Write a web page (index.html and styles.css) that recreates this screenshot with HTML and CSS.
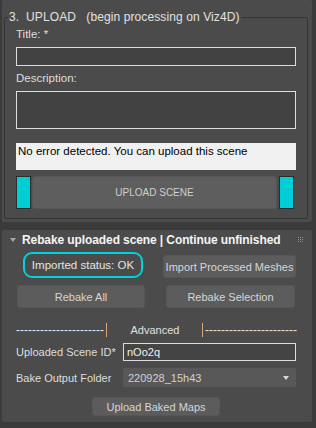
FILE: index.html
```html
<!DOCTYPE html>
<html lang="en">
<head>
    <meta charset="UTF-8">
    <meta name="viewport" content="width=device-width, initial-scale=1.0">
    <title>Viz4D - Upload</title>
    <link rel="stylesheet" href="styles.css">
</head>
<body>
    <!-- Rollout 3 : upload -->
    <div class="rollout upload">
        <fieldset class="group">
            <legend class="group-title">3.  UPLOAD   (begin processing on Viz4D)</legend>
            <label class="field-label">Title: *</label>
            <input class="text-input title-input" type="text">
            <label class="field-label second">Description:</label>
            <textarea class="text-input desc-input"></textarea>
            <div class="status-bar">No error detected. You can upload this scene</div>
            <div class="upload-row">
                <span class="cyan-block"></span>
                <button class="btn upload-btn">UPLOAD SCENE</button>
                <span class="cyan-block"></span>
            </div>
        </fieldset>
    </div>

    <!-- Rollout : rebake -->
    <div class="rollout rebake">
        <div class="rollout-header">
            <span class="caret"></span>
            <span class="rollout-title">Rebake uploaded scene | Continue unfinished</span>
            <svg class="grip" width="5" height="5" viewBox="0 0 5 5">
                <rect x="0" y="0" width="1" height="1"/><rect x="2" y="0" width="1" height="1"/><rect x="4" y="0" width="1" height="1"/>
                <rect x="0" y="2" width="1" height="1"/><rect x="2" y="2" width="1" height="1"/><rect x="4" y="2" width="1" height="1"/>
                <rect x="0" y="4" width="1" height="1"/><rect x="2" y="4" width="1" height="1"/><rect x="4" y="4" width="1" height="1"/>
            </svg>
        </div>

        <div class="btn-row first">
            <div class="status-pill">Imported status: OK</div>
            <button class="btn import-btn">Import Processed Meshes</button>
        </div>
        <div class="btn-row second">
            <button class="btn rebake-all">Rebake All</button>
            <button class="btn rebake-sel">Rebake Selection</button>
        </div>

        <div class="separator">
            <span class="dashes left">----------------------</span>
            <span class="pipe"></span>
            <span class="sep-label">Advanced</span>
            <span class="pipe"></span>
            <span class="dashes right">-----------------------</span>
        </div>

        <div class="field-row">
            <span class="row-label">Uploaded Scene ID*</span>
            <input class="text-input id-input" type="text" value="nOo2q">
        </div>
        <div class="field-row folder">
            <span class="row-label">Bake Output Folder</span>
            <div class="dropdown">
                <span>220928_15h43</span>
                <span class="dropdown-arrow"></span>
            </div>
        </div>

        <div class="bottom-row">
            <button class="btn upload-maps">Upload Baked Maps</button>
        </div>
    </div>
</body>
</html>
```

FILE: styles.css
```css
body {
    margin: 0;
    background-color: #3b3b3b;
    font-family: "Liberation Sans", Arial, sans-serif;
    font-size: 11px;
    color: #dedede;
}

/* Panneaux (rollouts) */
.rollout {
    margin: 0 4px 0 2px;
    background-color: #4b4b4b;
    border-radius: 2px;
}

.upload {
    padding: 10px 4px 3px 2px;
}

.rebake {
    margin-top: 8px;
    padding: 0 0 6px 0;
}

/* Cadre de groupe */
.group {
    margin: 0;
    padding: 3px 11px 9px 11px;
    border: 1px solid #353535;
    border-radius: 2px;
    min-width: 0;
}

.group-title {
    margin-left: -8px;
    padding: 0 1px;
    font-size: 12px;
    line-height: 14px;
    white-space: pre;
    color: #e2e2e2;
    letter-spacing: 0.1px;
}

.field-label {
    display: block;
    line-height: 14px;
    font-size: 11.5px;
}

    .field-label.second {
        margin-top: 5px;
    }

.text-input {
    display: block;
    box-sizing: border-box;
    margin: 0;
    background-color: #424242;
    border: 1px solid #dcdcdc;
    color: #f0f0f0;
    font-family: inherit;
    font-size: 11px;
    outline: none;
}

.title-input {
    width: 100%;
    height: 19px;
    margin-top: 6px;
}

.desc-input {
    width: 100%;
    height: 38px;
    margin-top: 6px;
    resize: none;
}

.status-bar {
    margin-top: 14px;
    height: 27px;
    box-sizing: border-box;
    padding: 1px 2px;
    font-size: 11.5px;
    line-height: 14px;
    background-color: #f0f0f0;
    color: #000;
    white-space: nowrap;
}

.upload-row {
    display: flex;
    height: 33px;
    margin-top: 6px;
    padding-right: 2px;
}

.cyan-block {
    width: 15px;
    box-sizing: border-box;
    border: 1px solid #2c2c2c;
    background-color: #00ced6;
}

/* Boutons */
.btn {
    margin: 0;
    padding: 0;
    box-sizing: border-box;
    background-color: #5c5c5c;
    border: 1px solid #565656;
    border-radius: 3px;
    color: #d6d6d6;
    font-family: inherit;
    font-size: 11px;
    white-space: nowrap;
    cursor: pointer;
}

.upload-btn {
    flex: 1;
    margin: 0 2px 0 1px;
    font-size: 10px;
    color: #cfcfcf;
    background-color: #5e5e5e;
}

/* En-tete du second panneau */
.rollout-header {
    display: flex;
    align-items: center;
    padding: 3px 9px 0 6px;
    height: 14px;
}

.caret {
    width: 0;
    height: 0;
    border-left: 3px solid transparent;
    border-right: 3px solid transparent;
    border-top: 4px solid #a6a6a6;
    margin-left: 2px;
}

.rollout-title {
    margin-left: 6px;
    font-size: 12px;
    font-weight: bold;
    color: #f4f4f4;
    line-height: 14px;
    letter-spacing: -0.1px;
    white-space: nowrap;
}

.grip {
    margin-left: auto;
    margin-top: -2px;
    fill: #8c8c8c;
}

.btn-row {
    display: flex;
    align-items: flex-end;
}

    .btn-row.first {
        margin-top: 5px;
        padding-left: 21px;
    }

    .btn-row.second {
        margin-top: 7px;
        padding-left: 15px;
    }

.status-pill {
    width: 120px;
    height: 26px;
    box-sizing: border-box;
    border: 2px solid #00d2dc;
    border-radius: 9px;
    text-align: center;
    font-size: 11.5px;
    line-height: 22px;
    color: #e4e4e4;
    white-space: nowrap;
}

.import-btn {
    width: 133px;
    height: 23px;
    margin-left: 20px;
}

.rebake-all {
    width: 128px;
    height: 23px;
}

.rebake-sel {
    width: 129px;
    height: 23px;
    margin-left: 21px;
}

/* Separateur "Advanced" */
.separator {
    display: flex;
    align-items: center;
    height: 14px;
    margin-top: 15px;
    padding-left: 14px;
    line-height: 14px;
    color: #e0e0e0;
}

.dashes {
    font-size: 12px;
    white-space: nowrap;
}

    .dashes.left {
        width: 89px;
    }

    .dashes.right {
        width: 92px;
    }

.pipe {
    width: 1px;
    height: 14px;
    margin: 0 2px 0 1px;
    background-color: #d9a66e;
}

.sep-label {
    width: 92px;
    text-align: center;
}

/* Champs avances */
.field-row {
    display: flex;
    align-items: center;
    margin-top: 6px;
    padding-left: 14px;
}

    .field-row.folder {
        margin-top: 7px;
    }

.row-label {
    width: 107px;
    white-space: nowrap;
}

.id-input {
    width: 173px;
    height: 18px;
    padding: 0 3px;
    background-color: #444;
}

.dropdown {
    display: flex;
    align-items: center;
    width: 173px;
    height: 19px;
    box-sizing: border-box;
    padding: 0 7px 0 5px;
    background-color: #585858;
    border-radius: 2px;
    color: #d2d2d2;
}

.dropdown-arrow {
    margin-left: auto;
    width: 0;
    height: 0;
    border-left: 3px solid transparent;
    border-right: 3px solid transparent;
    border-top: 4px solid #d8d8d8;
}

.bottom-row {
    display: flex;
    margin-top: 10px;
    padding-left: 90px;
}

.upload-maps {
    width: 128px;
    height: 19px;
}
```
